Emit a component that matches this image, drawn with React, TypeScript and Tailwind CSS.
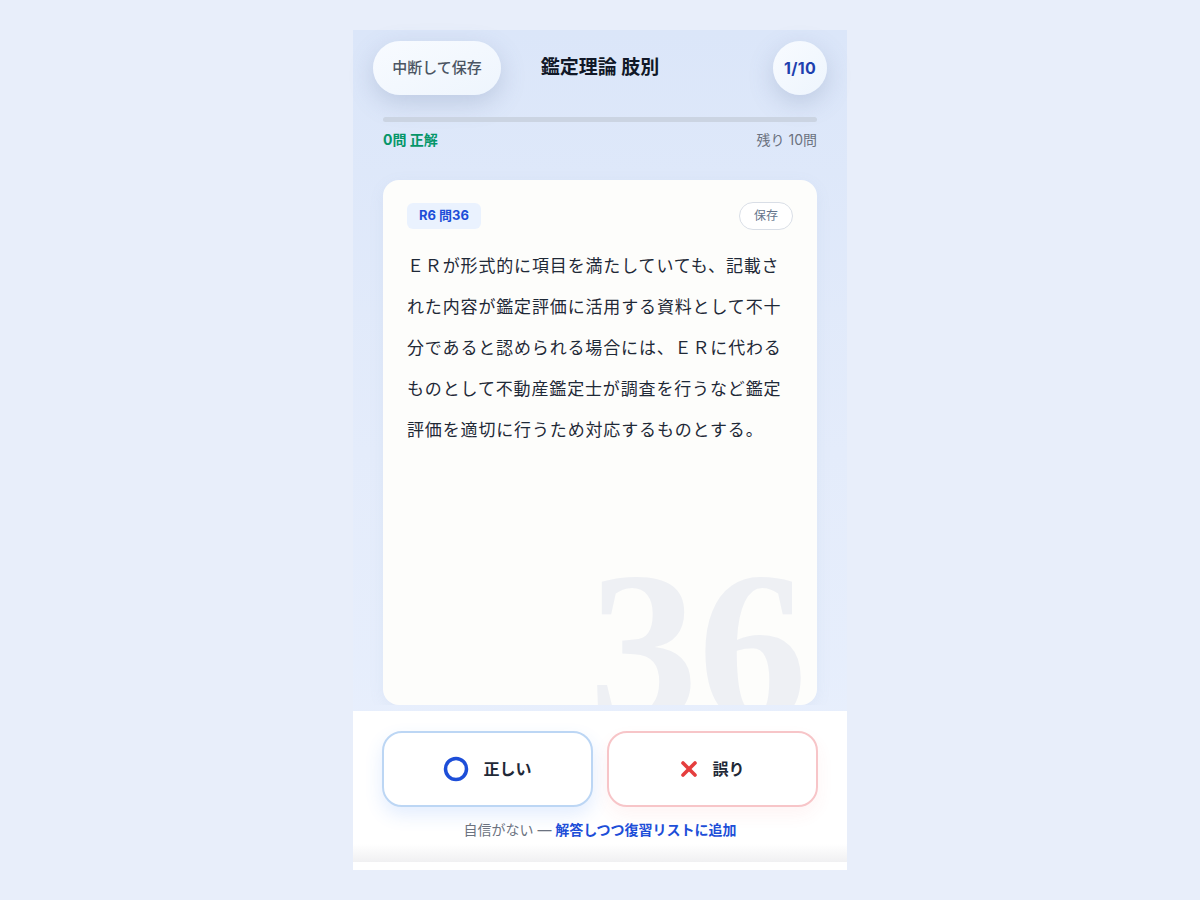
import React from "react";

const jp = "font-['Inter','Noto_Sans_CJK_JP',sans-serif]";

const QUESTION =
  "ＥＲが形式的に項目を満たしていても、記載された内容が鑑定評価に活用する資料として不十分であると認められる場合には、ＥＲに代わるものとして不動産鑑定士が調査を行うなど鑑定評価を適切に行うため対応するものとする。";

export default function App() {
  return (
    <div className={`min-h-[900px] w-full bg-[#e8eefa] pt-[30px] ${jp}`}>
      <div className="mx-auto flex h-[840px] w-[494px] flex-col bg-gradient-to-b from-[#dbe6f9] via-[#e4ecfb] to-[#e9f0fd]">
        {/* Header */}
        <div className="grid grid-cols-[1fr_auto_1fr] items-center px-5 pt-[11px]">
          <div>
            <button className="h-[54px] w-[128px] rounded-full bg-gradient-to-br from-[#f8fbff] to-[#eef5fd] text-[15px] font-medium text-[#4b5563] shadow-[0_8px_24px_rgba(100,120,160,0.25)]">
              中断して保存
            </button>
          </div>
          <h1 className="text-[19px] font-bold text-[#111827]">鑑定理論 肢別</h1>
          <div className="flex justify-end">
            <div className="flex h-[54px] w-[54px] items-center justify-center rounded-full bg-gradient-to-br from-[#f8fbff] to-[#eef5fd] text-[16px] font-bold tracking-[0.02em] text-[#1e40af] shadow-[0_8px_24px_rgba(100,120,160,0.25)]">
              1/10
            </div>
          </div>
        </div>

        {/* Progress */}
        <div className="mx-[30px] mt-[22px] h-[5px] rounded-full bg-[#cbd4e2]" />
        <div className="mx-[30px] mt-2 flex justify-between text-[14px] leading-5">
          <span className="font-bold text-[#059669]">0問 正解</span>
          <span className="text-[#6b7280]">残り 10問</span>
        </div>

        {/* Question card */}
        <div className="flex-1 overflow-hidden px-[30px] pt-[30px]">
          <div className="relative h-[525px] overflow-hidden rounded-2xl bg-[#fdfdfb] px-6 pt-[22px] shadow-[0_4px_16px_rgba(120,140,180,0.08)]">
            {/* big question number watermark */}
            <div className="pointer-events-none absolute right-[10px] top-[393px] select-none font-['Liberation_Serif',serif] text-[218px] font-bold leading-[0.7] text-[#eef0f4]">
              36
            </div>
            <div className="relative flex items-center justify-between">
              <span className="flex h-[26px] items-center rounded-md bg-[#eaf2fe] px-3 text-[13px] font-bold text-[#1d4ed8]">
                R6 問36
              </span>
              <span className="flex h-[28px] items-center rounded-full border border-[#d9dee6] bg-white px-[14px] text-[12px] text-[#64748b]">
                保存
              </span>
            </div>
            <p className="relative mt-[16px] text-[17px] leading-[41px] tracking-[0.05em] text-[#1f2937]">
              {QUESTION}
            </p>
          </div>
        </div>

        {/* Answer panel */}
        <div className="mt-[6px] flex h-[159px] flex-col bg-white">
          <div className="flex gap-[14px] px-[29px] pt-5">
            <button className="flex h-[76px] flex-1 items-center justify-center gap-[14px] rounded-[20px] border-2 border-[#bcd6f4] bg-white shadow-[0_8px_18px_rgba(59,130,246,0.14)]">
              <svg width="26" height="26" viewBox="0 0 26 26">
                <circle cx="13" cy="13" r="10.5" fill="none" stroke="#1d4ed8" strokeWidth="3.5" />
              </svg>
              <span className="text-[16px] font-bold text-[#1f2937]">正しい</span>
            </button>
            <button className="flex h-[76px] flex-1 items-center justify-center gap-[14px] rounded-[20px] border-2 border-[#f7c5c8] bg-white shadow-[0_8px_18px_rgba(239,68,68,0.06)]">
              <svg width="18" height="18" viewBox="0 0 18 18">
                <path d="M3 3 L15 15 M15 3 L3 15" stroke="#e53e3e" strokeWidth="3.6" strokeLinecap="round" />
              </svg>
              <span className="text-[16px] font-bold text-[#1f2937]">誤り</span>
            </button>
          </div>
          <p className="mt-[13px] text-center text-[14px] leading-5 text-[#6b7280]">
            自信がない — <span className="font-semibold text-[#1d4ed8]">解答しつつ復習リストに追加</span>
          </p>
          <div className="mt-auto h-[18px] bg-gradient-to-b from-white to-[#f0f0f2]" />
          <div className="h-[8px] bg-white" />
        </div>
      </div>
    </div>
  );
}
